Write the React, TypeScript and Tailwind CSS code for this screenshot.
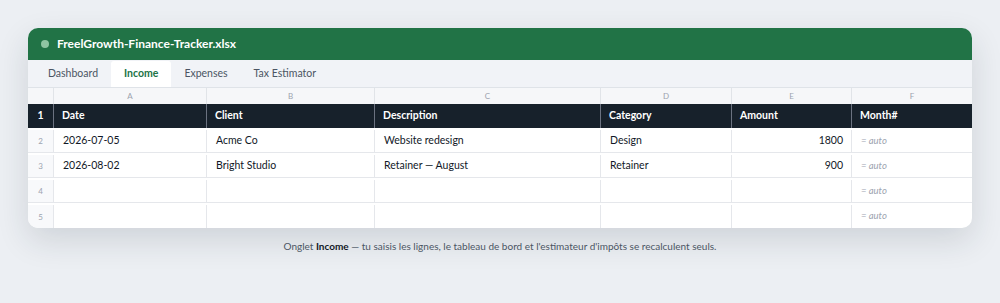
import React from "react";

const font = { fontFamily: 'Lato, "Open Sans", sans-serif' };

const cols = [
  { letter: "A", label: "Date", w: "w-[153px]" },
  { letter: "B", label: "Client", w: "w-[168px]" },
  { letter: "C", label: "Description", w: "w-[226px]" },
  { letter: "D", label: "Category", w: "w-[131px]" },
  { letter: "E", label: "Amount", w: "w-[120px]" },
  { letter: "F", label: "Month#", w: "flex-1" },
];

const rows = [
  { n: 2, date: "2026-07-05", client: "Acme Co", desc: "Website redesign", cat: "Design", amount: "1800" },
  { n: 3, date: "2026-08-02", client: "Bright Studio", desc: "Retainer — August", cat: "Retainer", amount: "900" },
  { n: 4, date: "", client: "", desc: "", cat: "", amount: "" },
  { n: 5, date: "", client: "", desc: "", cat: "", amount: "" },
];

const tabs = ["Dashboard", "Income", "Expenses", "Tax Estimator"];

export default function App() {
  return (
    <div className="min-h-[303px] w-full bg-[#eceff3] pt-[28px] px-[28px]" style={font}>
      <div className="overflow-hidden rounded-[10px] bg-white shadow-[0_12px_32px_rgba(30,41,59,0.14)]">
        {/* title bar */}
        <div className="flex h-[32px] items-center gap-[8px] bg-[#217346] px-[13px]">
          <span className="h-[8px] w-[8px] rounded-full bg-[#8fc4a2]" />
          <span className="text-[12px] font-bold text-white">FreelGrowth-Finance-Tracker.xlsx</span>
        </div>

        {/* sheet tabs */}
        <div className="flex h-[27px] items-end bg-[#f1f3f7] px-[7px]">
          {tabs.map((t) => {
            const active = t === "Income";
            return (
              <div
                key={t}
                className={`flex h-[26px] items-center px-[13px] text-[10.5px] ${
                  active ? "rounded-t-[3px] bg-white font-bold text-[#217346]" : "text-[#4b5563]"
                }`}
              >
                {t}
              </div>
            );
          })}
        </div>

        {/* column letters */}
        <div className="flex h-[17px] border-t border-[#dfe3e8] bg-[#f6f7f9]">
          <div className="w-[26px] border-r border-[#e1e4e8]" />
          {cols.map((c) => (
            <div
              key={c.letter}
              className={`${c.w} flex items-center justify-center border-r border-[#e1e4e8] text-[8px] text-[#9ca3af] last:border-r-0`}
            >
              {c.letter}
            </div>
          ))}
        </div>

        {/* header row */}
        <div className="flex h-[24px] bg-[#17212b]">
          <div className="flex w-[26px] items-center justify-center border-r border-[#6b7280] text-[10.5px] font-bold text-white">
            1
          </div>
          {cols.map((c) => (
            <div
              key={c.label}
              className={`${c.w} flex items-center border-r border-[#6b7280] px-[8px] text-[10.5px] font-bold text-white last:border-r-0`}
            >
              {c.label}
            </div>
          ))}
        </div>

        {/* data rows */}
        {rows.map((r) => (
          <div key={r.n} className="flex h-[25px] border-b border-[#e5e7eb] pt-[2px] text-[10.5px] text-[#111827] last:border-b-0">
            <div className="flex w-[26px] items-center justify-center border-r border-[#e5e7eb] bg-[#f8f9fb] text-[8px] text-[#9ca3af]">
              {r.n}
            </div>
            <div className="flex w-[153px] items-center border-r border-[#e5e7eb] px-[9px]">{r.date}</div>
            <div className="flex w-[168px] items-center border-r border-[#e5e7eb] px-[9px]">{r.client}</div>
            <div className="flex w-[226px] items-center border-r border-[#e5e7eb] px-[9px]">{r.desc}</div>
            <div className="flex w-[131px] items-center border-r border-[#e5e7eb] px-[9px]">{r.cat}</div>
            <div className="flex w-[120px] items-center justify-end border-r border-[#e5e7eb] px-[8px]">{r.amount}</div>
            <div className="flex flex-1 items-center px-[9px] text-[9.5px] italic text-[#9ca3af]">= auto</div>
          </div>
        ))}
      </div>

      <p className="mt-[11px] text-center text-[10px] text-[#4b5563]">
        Onglet <b className="font-bold text-[#111827]">Income</b> — tu saisis les lignes, le tableau de bord et l'estimateur d'impôts se recalculent seuls.
      </p>
    </div>
  );
}
